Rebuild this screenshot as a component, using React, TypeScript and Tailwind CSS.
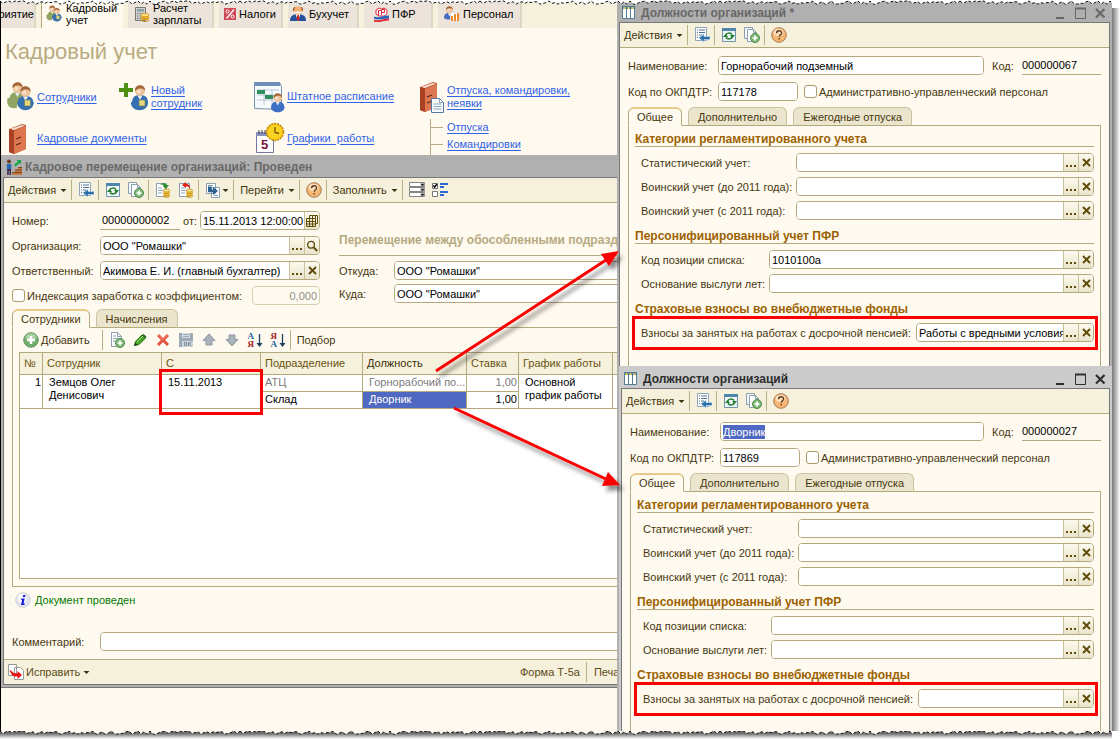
import { useEffect, useId, useRef } from "react";
import type { JSX, ReactNode } from "react";

/* ---------- icons ---------- */

function Caret(): JSX.Element {
	return (
		<svg className="h-[3px] w-[7px] shrink-0" viewBox="0 0 7 3">
			<path d="M0.5 0h6L3.5 3z" fill="#3f3110" />
		</svg>
	);
}

function CrossIcon(): JSX.Element {
	return (
		<svg className="h-[9px] w-[9px]" viewBox="0 0 9 9">
			<path d="M1 1l7 7M8 1L1 8" stroke="#5f4a08" strokeWidth="1.9" />
		</svg>
	);
}

function DotsIcon(): JSX.Element {
	return (
		<svg className="h-[11px] w-[11px]" viewBox="0 0 11 11">
			<path d="M0 8h2v2H0zM4 8h2v2H4zM8 8h2v2H8z" fill="#5f4a08" />
		</svg>
	);
}

function SearchIcon(): JSX.Element {
	return (
		<svg className="h-[12px] w-[12px]" viewBox="0 0 12 12" fill="none" stroke="#5f4a08">
			<circle cx="5" cy="4.8" r="3.4" strokeWidth="1.3" />
			<path d="M7.6 7.4l3.6 3.6" strokeWidth="2" />
		</svg>
	);
}

function CalendarIcon(): JSX.Element {
	return (
		<svg className="h-[12px] w-[12px]" viewBox="0 0 12 12" fill="none" stroke="#5f4a08" strokeWidth="1">
			<path d="M3.5 .5h8v8h-2M.5 3.5h9v8h-9zM.5 6.5h9M.5 9h9M3.500 3.500v8M6.500 .5v11M9.500 .5v8M3.500 .5v3" />
		</svg>
	);
}

function SaveListIcon(): JSX.Element {
	return (
		<svg className="h-4 w-4" viewBox="0 0 16 16">
			<path d="M1.5 0.5h11v13h-11z" fill="#fff" stroke="#8fa5b8" />
			<path d="M3 3h1M3 5.5h1M3 8h1M3 10.5h1M5 3h6M5 5.5h6M5 8h3M5 10.5h2" stroke="#53718c" />
			<path d="M5 11l5-4v2.5h6v3h-6V15z" fill="#2b70a8" stroke="#cfe2f0" strokeWidth="0.5" />
		</svg>
	);
}

function RefreshIcon(): JSX.Element {
	return (
		<svg className="h-4 w-4" viewBox="0 0 16 16">
			<path d="M1.5 2.5h13v12h-13z" fill="#eef5f8" stroke="#6f93ab" />
			<path d="M1 1h14v3H1z" fill="#4f86ab" />
			<path d="M4.500 8.500c1-3 5-3 6.500-1M11.500 9.500c-1 3-5 3-6.500 1" fill="none" stroke="#1f7a2a" strokeWidth="1.5" />
			<path d="M9 8h5l-2.500 3zM2 10h5L4.500 7z" fill="#1f7a2a" />
		</svg>
	);
}

function CopyPlusIcon(): JSX.Element {
	return (
		<svg className="h-4 w-4" viewBox="0 0 16 16">
			<path d="M0.5 0.5h8v11h-8z" fill="#f4f8fa" stroke="#8aa0b2" />
			<path d="M3.5 2.5h6l3 3v9h-9z" fill="#fff" stroke="#8aa0b2" />
			<path d="M9.5 2.5v3h3" fill="none" stroke="#8aa0b2" />
			<circle cx="11" cy="11" r="4.5" fill="#7fb877" stroke="#4d8a49" />
			<path d="M11 8.5v5M8.5 11h5" stroke="#fff" strokeWidth="1.7" />
		</svg>
	);
}

function DocPlusIcon(): JSX.Element {
	return (
		<svg className="h-4 w-4" viewBox="0 0 16 16">
			<path d="M2.5 0.5h6l4 4v10h-10z" fill="#fff" stroke="#8aa0b2" />
			<path d="M4 4h3M4 6.5h5M4 9h3M8.5 0.5v4h4" fill="none" stroke="#8aa0b2" />
			<circle cx="11" cy="11" r="4.5" fill="#7fb877" stroke="#4d8a49" />
			<path d="M11 8.5v5M8.5 11h5" stroke="#fff" strokeWidth="1.7" />
		</svg>
	);
}

function PostIcon({ undo = false }: { undo?: boolean }): JSX.Element {
	return (
		<svg className="h-4 w-4" viewBox="0 0 16 16">
			<path d="M1.5 1.5h10v13h-10z" fill="#fff" stroke="#8aa0b2" />
			<path d="M3 6h4M3 8.5h5M3 11h4" stroke="#8ba7bd" />
			<path d="M8.5 8.5h6v6h-6z" fill="#f2c33b" />
			<ellipse cx="11.5" cy="8.5" rx="3.3" ry="1.5" fill="#ffe88d" stroke="#b98412" strokeWidth="0.7" />
			<path d="M8.2 10.5c1 1.5 5.6 1.5 6.6 0M8.2 12.500c1 1.5 5.6 1.5 6.6 0M8.2 14.300c1 1.5 5.6 1.5 6.6 0" fill="none" stroke="#b98412" strokeWidth="0.8" />
			{undo ? (
				<path d="M4 3l4-3v2c3 0 4 1.5 4 5-1-2-2-2.500-4-2.500V6z" fill="#e02010" />
			) : (
				<path d="M5 3c2-2.500 5-2.500 6.500 0H14l-3.500 4L7.500 3.500H9C8 2.200 6.500 2.200 5 3z" fill="#2a8b2a" />
			)}
		</svg>
	);
}

function BasedOnIcon(): JSX.Element {
	return (
		<svg className="h-4 w-4" viewBox="0 0 16 16">
			<path d="M1.5 1.5h9v10h-9zM6.5 5.5h8v10h-8z" fill="#fff" stroke="#8aa0b2" />
			<path d="M9 13.500h4M3 3.500h5" stroke="#7d9bb3" />
			<path d="M3 4.500h3.500v3H8V5l5 4-5 4v-2.700H3z" fill="#2b608f" />
		</svg>
	);
}

function HelpIcon(): JSX.Element {
	return (
		<svg className="h-4 w-4" viewBox="0 0 16 16">
			<circle cx="8" cy="8" r="7.3" fill="#f7b574" stroke="#a67c55" />
			<ellipse cx="7.5" cy="5.5" rx="5" ry="3.8" fill="#fde0bd" />
			<path d="M5.6 6.200c0-3.400 5-3.200 5-.3 0 1.700-2.400 1.900-2.400 3.900M8.200 11v1.600" fill="none" stroke="#5d3b1e" strokeWidth="1.4" />
		</svg>
	);
}

function RowsIcon(): JSX.Element {
	return (
		<svg className="h-4 w-4" viewBox="0 0 16 16">
			<path d="M0.5 0.5h15v4H.5zM.5 5.5h15v4H.5zM.5 10.5h15v4H.5z" fill="#fff" stroke="#858585" />
			<path d="M11.5 1h4v3h-4zM11.5 6h4v3h-4zM11.5 11h4v3h-4z" fill="#aaa" />
			<path d="M12 2h3l-1.5 2zM12 7h3l-1.5 2zM12 12h3l-1.5 2z" fill="#111" />
		</svg>
	);
}

function ChecksIcon(): JSX.Element {
	return (
		<svg className="h-4 w-4" viewBox="0 0 16 16">
			<path d="M.5 1.5h5v5h-5zM.5 9.5h5v5h-5z" fill="#fff" stroke="#777" />
			<path d="M1.3 3.5l1.4 1.7L5 2" fill="none" stroke="#000" strokeWidth="1.4" />
			<path d="M8 1h8v2H8zM8 4h4v2H8zM8 9h8v2H8zM8 12h4v2H8z" fill="#2f68d0" />
		</svg>
	);
}

function AddIcon(): JSX.Element {
	return (
		<svg className="h-4 w-4 shrink-0" viewBox="0 0 16 16">
			<circle cx="8" cy="8" r="7.3" fill="#70ad6a" stroke="#6f9869" />
			<ellipse cx="8" cy="5" rx="5.5" ry="3.5" fill="#a9d2a2" />
			<path d="M8 4v8M4 8h8" stroke="#fff" strokeWidth="2.6" />
		</svg>
	);
}

function PencilIcon(): JSX.Element {
	return (
		<svg className="h-4 w-4" viewBox="0 0 16 16">
			<path d="M2.5 13.5l1-4L10 3l3.5 3L7 12.5z" fill="#49a528" stroke="#1d6a10" />
			<path d="M10 3l1.5-1 3 2.5-1 1.5z" fill="#2a6e1c" />
			<path d="M5 10l6-6" stroke="#a8e08a" />
			<path d="M2.5 13.5l.6-2.400 2 1.800z" fill="#222" />
		</svg>
	);
}

function DeleteIcon(): JSX.Element {
	return (
		<svg className="h-4 w-4" viewBox="0 0 16 16">
			<path d="M3 3l10 10M13 3L3 13" stroke="#e2513d" strokeWidth="3" />
			<path d="M3.5 3l4.500 4.500L12.500 3" fill="none" stroke="#f3a195" strokeWidth="0.8" />
		</svg>
	);
}

function DiskIcon(): JSX.Element {
	return (
		<svg className="h-4 w-4" viewBox="0 0 16 16">
			<path d="M1 1h14v14H1z" fill="#9baab6" />
			<path d="M4 1h8v5H4z" fill="#d7dfe5" />
			<path d="M5 2.5h6M5 4.5h6" stroke="#9baab6" />
			<path d="M4 9h11v6H4z" fill="#cbd3d9" />
			<path d="M6.5 10.5h2v3h-2zM10.5 10v4M13.5 10l-2.500 2 2.500 2" fill="none" stroke="#7f8e9a" />
		</svg>
	);
}

function MoveIcon({ down = false }: { down?: boolean }): JSX.Element {
	return (
		<svg className={down ? "h-4 w-4 rotate-180" : "h-4 w-4"} viewBox="0 0 16 16">
			<path d="M8 2l6 6.500h-3V13H5V8.500H2z" fill="#a9b2ba" stroke="#8c98a3" />
		</svg>
	);
}

function SortIcon({ first, last }: { first: string; last: string }): JSX.Element {
	return (
		<span className="flex h-4 w-4 items-center font-['Liberation_Serif',serif] text-[9px] leading-[8px] font-bold">
			<span className="flex w-2 flex-col">
				<span className={first === "А" ? "text-[#1f5f9c]" : "text-[#a02020]"}>{first}</span>
				<span className={last === "А" ? "text-[#1f5f9c]" : "text-[#a02020]"}>{last}</span>
			</span>
			<svg className="h-4 w-2" viewBox="0 0 8 16">
				<path d="M4.5 2v10" stroke="#1f3f60" strokeWidth="1.3" />
				<path d="M1.5 11h6l-3 4z" fill="#1f3f60" />
			</svg>
		</span>
	);
}

function TableIcon(): JSX.Element {
	return (
		<svg className="h-[13px] w-[13px] shrink-0" viewBox="0 0 13 13">
			<path d="M.5 1h12v11.500H.5z" fill="#fff" stroke="#587e96" />
			<path d="M4.500 1v11M8.500 1v11" stroke="#587e96" />
			<path d="M0 0h13v3H0z" fill="#4a7d9a" />
			<path d="M1.500 1h2v2h-2zM5.500 1h2v2h-2zM9.500 1h2v2h-2z" fill="#f0c44c" />
		</svg>
	);
}

function TransferIcon(): JSX.Element {
	return (
		<svg className="h-4 w-4 shrink-0" viewBox="0 0 16 16">
			<circle cx="3" cy="2.5" r="2" fill="#6c3d20" />
			<path d="M.8 5h4.500v5H.8z" fill="#2369b0" />
			<path d="M1.2 10h3.800v6H3.500v-4h-.8v4H1.200z" fill="#3b2b4b" />
			<path d="M6 16v-3h3v-2.500h3V8h4v8z" fill="#c47b42" />
			<path d="M6 13.5h10M9 11h7M12 8.500h4" stroke="#7a4420" />
			<path d="M8 6l4-3.500L10.500 1H15v4.500L13.500 4l-4 3.500z" fill="#12a54a" />
		</svg>
	);
}

function Person({ x, y, coat, hair = "#a5673a" }: { x: number; y: number; coat: string; hair?: string }): JSX.Element {
	return (
		<g transform={`translate(${x} ${y})`}>
			<path d="M0 18c0-6 3-8 8-8s8 2 8 8c-3 2.500-13 2.500-16 0z" fill={coat} />
			<path d="M5.500 10.500h5L8 15z" fill="#e8eef8" />
			<circle cx="8" cy="6" r="5" fill="#eec39c" />
			<path d="M3 6c-1-7 10-8 10.200-.5C11 2.800 6 3 5 4.500z" fill={hair} />
			<ellipse cx="6.8" cy="6.5" rx="2" ry="2" fill="#fadfc4" />
		</g>
	);
}

function PeopleIcon({ className }: { className: string }): JSX.Element {
	return (
		<svg className={className} viewBox="0 0 28 30">
			<Person x={3} y={0} coat="#8fa561" />
			<path d="M1 16c-1 6 0 11 9 10l3-10z" fill="#8fa561" />
			<Person x={11} y={4} coat="#3570b0" />
			<path d="M11 20c-1 11 17 11 16 0z" fill="#3570b0" />
			<path d="M18 18h6v6h-6z" fill="#e4d67a" stroke="#6a7a55" strokeWidth="0.6" />
		</svg>
	);
}

function NewPersonIcon(): JSX.Element {
	return (
		<svg className="h-[30px] w-[30px] shrink-0" viewBox="0 0 30 30">
			<path d="M5 1h4v5h5v4H9v5H5v-5H0V6h5z" fill="#4c8f14" />
			<Person x={13} y={3} coat="#3570b0" />
			<path d="M12 20c-1 11 18 11 17 0z" fill="#3570b0" />
			<path d="M20 18h6v6h-6z" fill="#e4d67a" stroke="#6a7a55" strokeWidth="0.6" />
		</svg>
	);
}

function ScheduleIcon(): JSX.Element {
	return (
		<svg className="h-[32px] w-[32px] shrink-0" viewBox="0 0 32 32">
			<path d="M1.500 1.500h25l2 4v23l-27-1z" fill="#f8fbfd" stroke="#7590b0" />
			<path d="M1 1h26v4H1z" fill="#7190b9" />
			<path d="M4 9h22M4 14h22M4 19h22M11 8v16M19 8v16" stroke="#b9c6d4" />
			<path d="M4 9h8v4H4zM12 14h8v4h-8z" fill="#2f9159" />
			<g transform="translate(18 12) scale(.84)">
				<Person x={0} y={0} coat="#3e6fc4" />
				<path d="M0 17c0 8 16 8 16 0z" fill="#3e6fc4" />
			</g>
		</svg>
	);
}

function CalendarClockIcon(): JSX.Element {
	return (
		<svg className="h-[32px] w-[32px] shrink-0" viewBox="0 0 32 32">
			<path d="M3.500 10.500h17v20h-17z" fill="#fff" stroke="#7676a5" />
			<path d="M3 10h18v4H3z" fill="#8d90c2" />
			<path d="M6 8v4M9 8v4M12 8v4M15 8v4" stroke="#444" />
			<text x="8" y="27" fontSize="13" fontWeight="bold" fontFamily="Liberation Sans, sans-serif" fill="#7a0f3c">
				5
			</text>
			<circle cx="22" cy="10" r="8.5" fill="#f7c411" stroke="#c28a0e" strokeWidth="1.5" strokeDasharray="2 1" />
			<circle cx="22" cy="10" r="7" fill="#fbd423" />
			<path d="M22 5v5.500l4 1" fill="none" stroke="#7d5205" strokeWidth="1.3" />
		</svg>
	);
}

function BinderIcon({ withPage = false }: { withPage?: boolean }): JSX.Element {
	return (
		<svg className={withPage ? "h-[32px] w-[26px] shrink-0" : "h-[32px] w-[28px] shrink-0"} viewBox="0 0 26 32">
			<path d="M2 6L15 1l4 1v24L7 31l-5-2z" fill="#c55430" />
			<path d="M7 8l12-5v23L7 31z" fill="#dd7752" />
			<path d="M3 6l12-4 3 .8L7 7z" fill="#f4dfd2" />
			<path d="M2 6l5 1.500V31l-5-2z" fill="#aa4122" />
			<path d="M9 16l5-2M9 22l5-2" stroke="#612312" strokeWidth="1.3" />
			{withPage && (
				<g>
					<path d="M13.500 17.500h8l4 4v10h-12z" fill="#f7fbfd" stroke="#5577a5" />
					<path d="M21.500 17.500v4h4M15.500 23h8M15.500 25.500h8M15.500 28h8" fill="none" stroke="#88a4bd" />
				</g>
			)}
		</svg>
	);
}

function PayIcon(): JSX.Element {
	return (
		<svg className="h-4 w-4 shrink-0" viewBox="0 0 16 16">
			<path d="M1.500 1.500h10v13h-10z" fill="#d0d0d0" stroke="#777" />
			<path d="M3 3h7v2.500H3z" fill="#88a0a0" />
			<path d="M3 7.500h7M3 10h7M3 12.500h7" stroke="#777" strokeDasharray="1.5 1" />
			<path d="M7 9h8v5H7z" fill="#efb830" />
			<ellipse cx="11" cy="9" rx="4" ry="1.8" fill="#ffe27a" stroke="#c2881a" strokeWidth="0.7" />
			<path d="M7 11.500c1 2 7 2 8 0M7 14c1 2 7 2 8 0" fill="none" stroke="#c2881a" />
		</svg>
	);
}

function PercentIcon(): JSX.Element {
	return (
		<svg className="h-3 w-3 shrink-0" viewBox="0 0 12 12">
			<path d="M0 0h12v12H0z" fill="#cf4a58" />
			<path d="M10 1.500L2.500 10.500" stroke="#fff" strokeWidth="1.3" />
			<circle cx="3.5" cy="3.5" r="1.5" fill="none" stroke="#fff" />
			<circle cx="8.5" cy="8.5" r="1.5" fill="none" stroke="#fff" />
		</svg>
	);
}

function AccountantIcon(): JSX.Element {
	return (
		<svg className="h-4 w-4 shrink-0" viewBox="0 0 16 16">
			<path d="M0 15c0-5 3-7 8-7s8 2 8 7z" fill="#24509c" />
			<path d="M5.500 8h5L8 15z" fill="#fff" />
			<path d="M7.300 9h1.500l.8 4L8 15l-1.300-2z" fill="#d02020" />
			<circle cx="8" cy="4.5" r="4.2" fill="#f3b27a" />
			<path d="M3.500 5.500C2 3 4 .5 5.500 1 4.500 2 4.500 4 3.500 5.500zM12.500 5.500C14 3 12 .5 10.500 1c1 1 1 3 2 4.500z" fill="#9a5520" />
			<path d="M4.500 6.500h3l.5-.7.500.7h3" fill="none" stroke="#fff" strokeWidth="1.3" />
		</svg>
	);
}

function PensionIcon(): JSX.Element {
	return (
		<svg className="h-[15px] w-[15px] shrink-0" viewBox="0 0 15 15">
			<path d="M2 7V3l3-2 2.500 1L10 1l3 2v4l-3 2H5z" fill="#fff" stroke="#e0283c" />
			<path d="M4.500 8V3.500h3V8M7.500 5.500h3v-3h-3" fill="none" stroke="#e0283c" />
			<path d="M0 9.500c4 2 10-1 15-1v3c-5 0-11 2-15 0z" fill="#2465bf" />
			<path d="M0 12.500c4 2 10-1 15-1v2c-5 0-11 3-15 1z" fill="#e0283c" />
		</svg>
	);
}

function StaffIcon(): JSX.Element {
	return (
		<svg className="h-4 w-4 shrink-0" viewBox="0 0 16 16">
			<g transform="scale(.68)">
				<Person x={0} y={0} coat="#456cc2" />
			</g>
			<path d="M6.500 6.500h9v8h-9z" fill="#fff" stroke="#ddd" />
			<path d="M7 10h2v5H7zM10 8h2v7h-2zM13 7h2v8h-2z" fill="#ef8a2c" />
		</svg>
	);
}

function InfoIcon(): JSX.Element {
	return (
		<svg className="h-4 w-4 shrink-0" viewBox="0 0 16 16">
			<circle cx="8" cy="8" r="7.3" fill="#e4e4ec" stroke="#cfcfd8" />
			<circle cx="7" cy="6" r="4.5" fill="#f8f8fc" />
			<path d="M8.300 3h2.200l-.5 2H7.800zM6.500 6.500h3.200l-1.200 5h1.200l-.3 1.500H6l1.200-5H6.100z" fill="#1616e0" />
		</svg>
	);
}

function FixIcon(): JSX.Element {
	return (
		<svg className="h-4 w-4 shrink-0" viewBox="0 0 16 16">
			<path d="M.5.5h8v11h-8zM6.500 3.500h6l3 3v9h-9z" fill="#fff" stroke="#999" />
			<path d="M1.500 6.500c2-1 3 2.500 5 2.800h3V7l4.500 4-4.500 4v-2.500H7c-3 0-4-3.500-5.500-6z" fill="#e81414" />
		</svg>
	);
}

/* ---------- shared controls ---------- */

function Separator(): JSX.Element {
	return <span className="mr-[2px] ml-px h-5 w-px shrink-0 bg-[#b9b084]" />;
}

function ToolButton({ title, children, caret = false }: { title: string; children: ReactNode; caret?: boolean }): JSX.Element {
	return (
		<button type="button" aria-label={title} className="flex h-6 shrink-0 items-center gap-px pr-[3px] pl-1">
			{children}
			{caret && <Caret />}
		</button>
	);
}

function MenuButton({ children }: { children: ReactNode }): JSX.Element {
	return (
		<button type="button" className="flex h-6 shrink-0 items-center gap-1 pr-[3px] pl-1 whitespace-nowrap">
			{children}
			<Caret />
		</button>
	);
}

type FieldButton = "dots" | "clear" | "search" | "calendar";

function FieldButtons({ buttons }: { buttons: FieldButton[] }): JSX.Element {
	const icons = { dots: <DotsIcon />, clear: <CrossIcon />, search: <SearchIcon />, calendar: <CalendarIcon /> };
	const titles = { dots: "Выбрать", clear: "Очистить", search: "Открыть", calendar: "Календарь" };
	return (
		<>
			{buttons.map((name) => (
				<button
					key={name}
					type="button"
					aria-label={titles[name]}
					className="flex w-[15px] shrink-0 items-center justify-center border-l border-[#c9c19a] bg-linear-to-b from-[#fcfaef] to-[#e9e4cb]"
				>
					{icons[name]}
				</button>
			))}
		</>
	);
}

interface TextBoxProps {
	id: string;
	value?: string;
	className: string;
	buttons?: FieldButton[];
	selected?: boolean;
}

function TextBox({ id, value = "", className, buttons = [], selected = false }: TextBoxProps): JSX.Element {
	const ref = useRef<HTMLInputElement>(null);

	useEffect(() => {
		if (selected) {
			ref.current?.focus();
			ref.current?.select();
		}
	}, [selected]);

	return (
		<div className={`flex h-[19px] overflow-hidden rounded border border-[#b3a97d] bg-white ${className}`}>
			<input
				ref={ref}
				id={id}
				defaultValue={value}
				className="w-full min-w-0 flex-1 bg-white pl-[2px] text-black outline-none selection:bg-[#4f68c1] selection:text-white"
			/>
			<FieldButtons buttons={buttons} />
		</div>
	);
}

function FormRow({ label, labelClass, value, buttons, bleed = false, children }: {
	label: string;
	labelClass: string;
	value?: string;
	buttons?: FieldButton[];
	bleed?: boolean;
	children?: ReactNode;
}): JSX.Element {
	const id = useId();
	return (
		<div className={bleed ? "relative -mr-2 flex items-center" : "relative flex items-center"}>
			<label htmlFor={id} className={`shrink-0 whitespace-nowrap ${labelClass}`}>
				{label}
			</label>
			<TextBox id={id} value={value} buttons={buttons} className="min-w-0 flex-1" />
			{children}
		</div>
	);
}

function CheckBox({ label }: { label: string }): JSX.Element {
	return (
		<label className="flex items-center gap-[2px] whitespace-nowrap">
			<input type="checkbox" className="h-[13px] w-[13px] shrink-0 appearance-none rounded-[3px] border border-[#a79c6c] bg-white" />
			{label}
		</label>
	);
}

function Tabs({ items }: { items: string[] }): JSX.Element {
	return (
		<div role="tablist" className="relative z-10 -mb-px flex gap-[6px]">
			{items.map((item, i) => (
				<button
					key={item}
					type="button"
					role="tab"
					aria-selected={i === 0}
					className={
						i === 0
							? "h-[19px] rounded-t-md border border-t-2 border-[#b3a97d] border-t-[#e9c98a] border-b-[#fffaf0] bg-[#fffaf0] px-2 whitespace-nowrap"
							: "h-[19px] rounded-t-md border border-[#cbc39f] border-b-[#b3a97d] bg-[#ebe5ce] px-[9px] whitespace-nowrap"
					}
				>
					{item}
				</button>
			))}
		</div>
	);
}

/* ---------- position card ---------- */

function Section({ title, children }: { title: string; children: ReactNode }): JSX.Element {
	return (
		<section>
			<h3 className="h-[21px] border-b border-[#b3a97d] pt-1 text-xs leading-[18px] font-bold whitespace-nowrap text-[#9c6200]">{title}</h3>
			<div className="flex flex-col gap-[5px] pt-[6px] pl-[6px]">{children}</div>
		</section>
	);
}

interface PositionWindowProps {
	title: string;
	active?: boolean;
	name: string;
	code: string;
	okpdtr: string;
	listCode?: string;
	pension?: string;
}

function PositionWindow({ title, active = false, name, code, okpdtr, listCode, pension }: PositionWindowProps): JSX.Element {
	const id = useId();
	return (
		<section
			className={
				active
					? "ml-[2px] flex flex-1 flex-col bg-[#cbcbcb] px-[2px] text-[#2e2e2e]"
					: "flex h-[366px] flex-col bg-[#b0b0b0] px-[2px] text-[#686868]"
			}
		>
			<header className="flex h-[22px] items-center gap-[6px] pt-[3px] pl-[3px]">
				<TableIcon />
				<h2 className="text-xs font-bold whitespace-nowrap">{title}</h2>
				<div className="mr-1 ml-auto flex items-center gap-2">
					<button type="button" aria-label="Свернуть">
						<svg className="h-3 w-3" viewBox="0 0 12 12">
							<path d="M2 10h8v2H2z" fill="currentColor" />
						</svg>
					</button>
					<button type="button" aria-label="Развернуть">
						<svg className="h-3 w-3" viewBox="0 0 12 12">
							<path d="M1.500 1.500h10v10h-10z" fill="none" stroke="currentColor" />
							<path d="M1 1.500h11" stroke="currentColor" strokeWidth="2" />
						</svg>
					</button>
					<button type="button" aria-label="Закрыть">
						<svg className="h-3 w-3" viewBox="0 0 12 12">
							<path d="M2 2l8.500 8.500M10.500 2L2 10.500" stroke="currentColor" strokeWidth="2.2" />
						</svg>
					</button>
				</div>
			</header>

			<div className="flex min-h-0 flex-1 flex-col border-x border-t border-[#777] bg-[#fffaf0] text-[#46370f]">
				<div className="flex h-[25px] shrink-0 items-center border-b border-[#b3a97d] bg-[#f5f1dc]">
					<MenuButton>Действия</MenuButton>
					<Separator />
					<ToolButton title="Записать и закрыть"><SaveListIcon /></ToolButton>
					<Separator />
					<ToolButton title="Перечитать"><RefreshIcon /></ToolButton>
					<ToolButton title="Скопировать"><CopyPlusIcon /></ToolButton>
					<Separator />
					<ToolButton title="Справка"><HelpIcon /></ToolButton>
				</div>

				<div className="flex min-h-0 flex-1 flex-col pt-2 pr-2 pl-2">
					<div className="flex items-center">
						<label htmlFor={`${id}-name`} className="w-[90px] shrink-0 whitespace-nowrap">Наименование:</label>
						<TextBox id={`${id}-name`} value={name} selected={active} className="min-w-0 flex-1" />
						<label htmlFor={`${id}-code`} className="w-[38px] shrink-0 pl-2 whitespace-nowrap">Код:</label>
						<input
							id={`${id}-code`}
							defaultValue={code}
							className="h-[19px] w-[79px] shrink-0 border-b border-[#b3a97d] bg-transparent pb-px text-black"
						/>
					</div>
					<div className="mt-[7px] flex items-center">
						<label htmlFor={`${id}-okpdtr`} className="w-[90px] shrink-0 whitespace-nowrap">Код по ОКПДТР:</label>
						<TextBox id={`${id}-okpdtr`} value={okpdtr} className="mr-[6px] w-20 shrink-0" />
						<CheckBox label="Административно-управленческий персонал" />
					</div>

					<div className="mt-[6px] flex min-h-0 flex-1 flex-col">
						<Tabs items={["Общее", "Дополнительно", "Ежегодные отпуска"]} />
						<div className="flex flex-1 flex-col gap-[3px] border-x border-t border-[#b3a97d] px-[6px]">
							<Section title="Категории регламентированного учета">
								<FormRow label="Статистический учет:" labelClass="w-[155px]" buttons={["dots", "clear"]} />
								<FormRow label="Воинский учет (до 2011 года):" labelClass="w-[155px]" buttons={["dots", "clear"]} />
								<FormRow label="Воинский учет (с 2011 года):" labelClass="w-[155px]" buttons={["dots", "clear"]} />
							</Section>
							<Section title="Персонифицированный учет ПФР">
								<FormRow label="Код позиции списка:" labelClass="w-[128px]" value={listCode} buttons={["dots", "clear"]} />
								<FormRow label="Основание выслуги лет:" labelClass="w-[128px]" buttons={["dots", "clear"]} />
							</Section>
							<Section title="Страховые взносы во внебюджетные фонды">
								<FormRow
									label="Взносы за занятых на работах с досрочной пенсией:"
									labelClass="w-[275px]"
									value={pension}
									buttons={["dots", "clear"]}
								>
									<span className="pointer-events-none absolute -top-[7px] -right-1 -bottom-2 -left-[9px] border-3 border-[#fb0000]" />
								</FormRow>
							</Section>
						</div>
					</div>
				</div>
			</div>
		</section>
	);
}

/* ---------- main page ---------- */

function SectionTabs(): JSX.Element {
	const tab = "flex h-7 shrink-0 items-center gap-[3px] border-r-2 border-[#dcd6c4] bg-[#ece4da] text-left leading-[12px]";
	return (
		<nav className="flex h-7 shrink-0 gap-[5px] bg-[#f5f1dc] text-black">
			<button type="button" className={`${tab} w-[35px] justify-end overflow-hidden`}>риятие</button>
			<button type="button" className="flex h-7 w-[82px] shrink-0 items-center gap-1 border-l border-[#b3a97d] bg-[#fffaf0] pl-1 text-left leading-[12px]">
				<PeopleIcon className="h-[18px] w-[16px] shrink-0" />
				<span>Кадровый<br />учет</span>
			</button>
			<button type="button" className={`${tab} w-[86px] pl-[6px]`}><PayIcon /><span>Расчет<br />зарплаты</span></button>
			<button type="button" className={`${tab} w-[64px] pl-[5px]`}><PercentIcon />Налоги</button>
			<button type="button" className={`${tab} w-[71px] pl-[2px]`}><AccountantIcon />Бухучет</button>
			<button type="button" className={`${tab} w-[69px] pl-[10px]`}><PensionIcon />ПФР</button>
			<button type="button" className={`${tab} w-[84px] pl-[6px]`}><StaffIcon />Персонал</button>
		</nav>
	);
}

function PageLink({ icon, children }: { icon: ReactNode; children: ReactNode }): JSX.Element {
	return (
		<a href="#" className="flex h-[34px] items-center gap-[2px] leading-[13px] whitespace-nowrap text-[#2f62e8] underline underline-offset-2">
			{icon}
			<span>{children}</span>
		</a>
	);
}

function Links(): JSX.Element {
	return (
		<div className="flex h-[75px] shrink-0 pl-[5px]">
			<div className="flex w-[247px] shrink-0 flex-col gap-2">
				<div className="flex">
					<div className="w-[113px]">
						<PageLink icon={<PeopleIcon className="h-[30px] w-[29px] shrink-0" />}>Сотрудники</PageLink>
					</div>
					<PageLink icon={<NewPersonIcon />}>Новый<br />сотрудник</PageLink>
				</div>
				<PageLink icon={<BinderIcon />}><span className="pl-px">Кадровые документы</span></PageLink>
			</div>
			<div className="flex w-[165px] shrink-0 flex-col gap-2">
				<PageLink icon={<ScheduleIcon />}>Штатное расписание</PageLink>
				<PageLink icon={<CalendarClockIcon />}>Графики&nbsp; работы</PageLink>
			</div>
			<div className="flex flex-col gap-[5px]">
				<PageLink icon={<BinderIcon withPage />}><span className="block pl-px">Отпуска, командировки,<br />неявки</span></PageLink>
				<ul className="ml-3 h-9 border-l border-[#b9ab82] leading-[17px]">
					{["Отпуска", "Командировки"].map((name) => (
						<li key={name} className="flex items-center gap-1">
							<span className="h-px w-3 bg-[#b9ab82]" />
							<a href="#" className="text-[#2f62e8] underline underline-offset-2">{name}</a>
						</li>
					))}
				</ul>
			</div>
		</div>
	);
}

function EmployeesTable(): JSX.Element {
	const th = "h-[21px] border border-t-0 border-[#b3a97d] px-1 text-left font-normal whitespace-nowrap";
	const td = "border border-[#b3a97d] px-[6px] align-top leading-[13px]";
	const half = "h-[17px] border border-[#b3a97d] px-1 leading-[15px] whitespace-nowrap overflow-hidden";
	return (
		<div className="h-[227px] border border-r-0 border-[#b3a97d] bg-white">
			<table className="-ml-px w-[calc(100%+1px)] table-fixed border-collapse">
				<colgroup>
					<col className="w-[23px]" />
					<col className="w-[119px]" />
					<col className="w-[99px]" />
					<col className="w-[102px]" />
					<col className="w-[104px]" />
					<col className="w-[52px]" />
					<col className="w-[94px]" />
					<col />
				</colgroup>
				<thead className="bg-[#f5f1dc] text-[#6a5310]">
					<tr>
						<th className={th}>№</th>
						<th className={th}>Сотрудник</th>
						<th className={th}>С</th>
						<th className={th}>Подразделение</th>
						<th className={`${th} text-[#3d2f08]`}>Должность</th>
						<th className={th}>Ставка</th>
						<th className={th}>График работы</th>
						<th className="border-b border-[#b3a97d]" />
					</tr>
				</thead>
				<tbody className="text-black">
					<tr>
						<td rowSpan={2} className="border border-[#b3a97d] px-px pt-px text-right align-top leading-[13px]">1</td>
						<td rowSpan={2} className={`${td} pt-px`}>Земцов Олег<br />Денисович</td>
						<td rowSpan={2} className={`${td} relative pt-px`}>
							15.11.2013
							<span className="pointer-events-none absolute -inset-x-[3px] -top-[6px] -bottom-[7px] border-3 border-[#fb0000]" />
						</td>
						<td className={`${half} text-[#7b7b7b]`}>АТЦ</td>
						<td className={`${half} pl-[6px] text-[#7b7b7b]`}>Горнорабочий по...</td>
						<td className={`${half} pr-px text-right text-[#7b7b7b]`}>1,00</td>
						<td rowSpan={2} className={`${td} pt-px`}>Основной<br />график работы</td>
						<td rowSpan={2} className="border-b border-[#b3a97d]" />
					</tr>
					<tr>
						<td className={half}>Склад</td>
						<td className={`${half} bg-[#4f68c1] pl-[6px] text-white`}>Дворник</td>
						<td className={`${half} pr-px text-right`}>1,00</td>
					</tr>
				</tbody>
			</table>
		</div>
	);
}

function TransferWindow(): JSX.Element {
	return (
		<section className="shrink-0 border-b border-[#777] bg-[#b0b0b0] pb-[2px] pl-[2px]">
			<header className="flex h-[22px] items-center gap-[3px] pt-[2px] pl-[3px] text-[#686868]">
				<TransferIcon />
				<h2 className="text-xs font-bold whitespace-nowrap">Кадровое перемещение организаций: Проведен</h2>
			</header>
			<div className="border-y border-l border-[#777] bg-[#fffaf0] text-[#46370f]">
				<div className="flex h-[25px] items-center border-b border-[#b3a97d] bg-[#f5f1dc]">
					<MenuButton>Действия</MenuButton>
					<Separator />
					<ToolButton title="Записать и закрыть"><SaveListIcon /></ToolButton>
					<Separator />
					<ToolButton title="Перечитать"><RefreshIcon /></ToolButton>
					<ToolButton title="Скопировать"><CopyPlusIcon /></ToolButton>
					<Separator />
					<ToolButton title="Провести"><PostIcon /></ToolButton>
					<ToolButton title="Отменить проведение"><PostIcon undo /></ToolButton>
					<Separator />
					<ToolButton title="Ввести на основании" caret><BasedOnIcon /></ToolButton>
					<Separator />
					<MenuButton>Перейти</MenuButton>
					<Separator />
					<ToolButton title="Справка"><HelpIcon /></ToolButton>
					<Separator />
					<MenuButton>Заполнить</MenuButton>
					<Separator />
					<ToolButton title="Список"><RowsIcon /></ToolButton>
					<ToolButton title="Настройка"><ChecksIcon /></ToolButton>
				</div>

				<div className="flex gap-[19px] overflow-hidden pt-2 pl-2">
					<div className="flex w-[308px] shrink-0 flex-col gap-[6px]">
						<div className="flex items-center">
							<label htmlFor="number" className="w-[88px] shrink-0">Номер:</label>
							<input id="number" defaultValue="00000000002" className="h-[19px] w-20 shrink-0 border-b border-[#b3a97d] bg-transparent pb-px pl-[2px] text-black" />
							<label htmlFor="date" className="w-5 shrink-0 pl-[3px]">от:</label>
							<TextBox id="date" value="15.11.2013 12:00:00" buttons={["calendar"]} className="min-w-0 flex-1" />
						</div>
						<FormRow label="Организация:" labelClass="w-[88px]" value={'ООО "Ромашки"'} buttons={["dots", "search"]} />
						<FormRow label="Ответственный:" labelClass="w-[88px]" value="Акимова Е. И. (главный бухгалтер)" buttons={["dots", "clear"]} />
						<div className="flex h-[19px] items-center justify-between">
							<CheckBox label="Индексация заработка с коэффициентом:" />
							<input
								aria-label="Коэффициент"
								disabled
								defaultValue="0,000"
								className="h-[19px] w-[68px] rounded border border-[#d6cfb4] bg-[#fffaf0] px-[2px] text-right text-[#8f8f8f]"
							/>
						</div>
					</div>
					<div className="flex min-w-0 flex-1 flex-col gap-1 pt-5">
						<h3 className="mb-px h-[25px] border-b border-[#b3a97d] text-xs leading-[18px] font-bold whitespace-nowrap text-[#b5aa80]">
							Перемещение между обособленными подразделениями
						</h3>
						<FormRow bleed label="Откуда:" labelClass="w-[55px]" value={'ООО "Ромашки"'} />
						<FormRow bleed label="Куда:" labelClass="w-[55px]" value={'ООО "Ромашки"'} />
					</div>
				</div>

				<div className="overflow-hidden pt-1 pl-2">
					<Tabs items={["Сотрудники", "Начисления"]} />
					<div className="border border-r-0 border-[#b3a97d] pb-[7px] pl-[6px]">
						<div className="flex h-6 items-center">
							<button type="button" className="mr-[7px] flex shrink-0 items-center gap-[2px] px-1">
								<AddIcon />
								<span><u>Д</u>обавить</span>
							</button>
							<Separator />
							<ToolButton title="Скопировать строку"><DocPlusIcon /></ToolButton>
							<ToolButton title="Изменить"><PencilIcon /></ToolButton>
							<ToolButton title="Удалить"><DeleteIcon /></ToolButton>
							<ToolButton title="Сохранить"><DiskIcon /></ToolButton>
							<ToolButton title="Вверх"><MoveIcon /></ToolButton>
							<ToolButton title="Вниз"><MoveIcon down /></ToolButton>
							<ToolButton title="По возрастанию"><SortIcon first="А" last="Я" /></ToolButton>
							<ToolButton title="По убыванию"><SortIcon first="Я" last="А" /></ToolButton>
							<Separator />
							<button type="button" className="px-1">Подбор</button>
						</div>
						<EmployeesTable />
					</div>
					<p className="flex h-[45px] items-start gap-1 pt-[5px] pl-[3px] leading-4 text-[#007a00]">
						<InfoIcon />
						Документ проведен
					</p>
					<FormRow bleed label="Комментарий:" labelClass="w-[88px]" />
				</div>

				<footer className="mt-2 flex h-[25px] items-center border-t border-[#b3a97d] bg-[#f5f1dc] text-[#5b4a18]">
					<button type="button" className="flex items-center gap-[2px] pl-1">
						<FixIcon />
						<span className="pr-px">Исправить</span>
						<Caret />
					</button>
					<div className="ml-auto flex w-[97px] items-center gap-[5px] overflow-hidden whitespace-nowrap">
						<button type="button">Форма Т-5а</button>
						<Separator />
						<button type="button">Печать</button>
					</div>
				</footer>
			</div>
		</section>
	);
}

/* ---------- torn paper edge ---------- */

function tearPoints(top: number): string {
	const points: string[] = [];
	for (let x = 0; x <= 240; x += 3) {
		const wave = x === 240 ? 0 : (x * 7 + ((x * x) % 11) * 3) % 5;
		points.push(`${x},${top + wave * 0.8}`);
	}
	return points.join(" ");
}

function TornEdge({ side }: { side: "top" | "bottom" }): JSX.Element {
	const line = tearPoints(side === "top" ? 1 : 0);
	return (
		<svg className="pointer-events-none block h-2 w-full shrink-0">
			<defs>
				<linearGradient id="tear-shadow" x1="0" x2="0" y1="0" y2="1">
					<stop offset="0.3" stopColor="#6d6d6d" />
					<stop offset="1" stopColor="#fff" />
				</linearGradient>
				<pattern id={`tear-${side}`} width="240" height="8" patternUnits="userSpaceOnUse">
					{side === "top" ? (
						<polygon points={`0,0 ${line} 240,0`} fill="#fff" />
					) : (
						<>
							<rect width="240" height="8" fill="url(#tear-shadow)" />
							<polygon points={`0,0 ${line} 240,0`} fill="#fffaf0" />
						</>
					)}
					<polyline points={line} fill="none" stroke="#111" strokeDasharray="3 2" />
				</pattern>
			</defs>
			<rect width="100%" height="8" fill={`url(#tear-${side})`} />
		</svg>
	);
}

function Arrows(): JSX.Element {
	return (
		<svg className="pointer-events-none absolute top-[240px] right-[498px] z-20 h-[256px] w-[190px] overflow-visible" viewBox="0 0 190 256">
			<defs>
				<filter id="arrow-shadow" x="-20%" y="-20%" width="150%" height="150%">
					<feDropShadow dx="4" dy="5" stdDeviation="2" floodColor="#000" floodOpacity="0.45" />
				</filter>
			</defs>
			<g filter="url(#arrow-shadow)" fill="#fb0000">
				<path d="M4 131L174 20M22 168l152 71" stroke="#fb0000" strokeWidth="3" />
				<path d="M187 11l-10 15-8-12z" />
				<path d="M188 245l-18 1 6-14z" />
			</g>
		</svg>
	);
}

export default function App(): JSX.Element {
	return (
		<div className="relative flex min-h-screen flex-col overflow-hidden bg-white font-['Liberation_Sans',Arial,sans-serif] text-[11px] leading-[14px]">
			<div className="absolute top-0 right-2 left-0 z-20">
				<TornEdge side="top" />
			</div>

			<div className="flex flex-1">
				<main className="flex min-w-0 flex-1 flex-col overflow-hidden border-l border-black bg-[#fffaf0]">
					<SectionTabs />
					<h1 className="h-[52px] shrink-0 pt-[10px] pl-1 text-[22px] leading-[28px] text-[#b9ab82]">Кадровый учет</h1>
					<Links />
					<TransferWindow />
				</main>

				<aside className="flex w-[495px] shrink-0 flex-col bg-[#b0b0b0]">
					<PositionWindow
						title="Должности организаций *"
						name="Горнорабочий подземный"
						code="000000067"
						okpdtr="117178"
						listCode="1010100а"
						pension="Работы с вредными условиями труда"
					/>
					<PositionWindow active title="Должности организаций" name="Дворник" code="000000027" okpdtr="117869" />
				</aside>
				<div className="mt-2 w-2 shrink-0 bg-linear-to-r from-[#777] to-white" />
			</div>

			<div className="pr-2">
				<TornEdge side="bottom" />
			</div>
			<Arrows />
		</div>
	);
}
